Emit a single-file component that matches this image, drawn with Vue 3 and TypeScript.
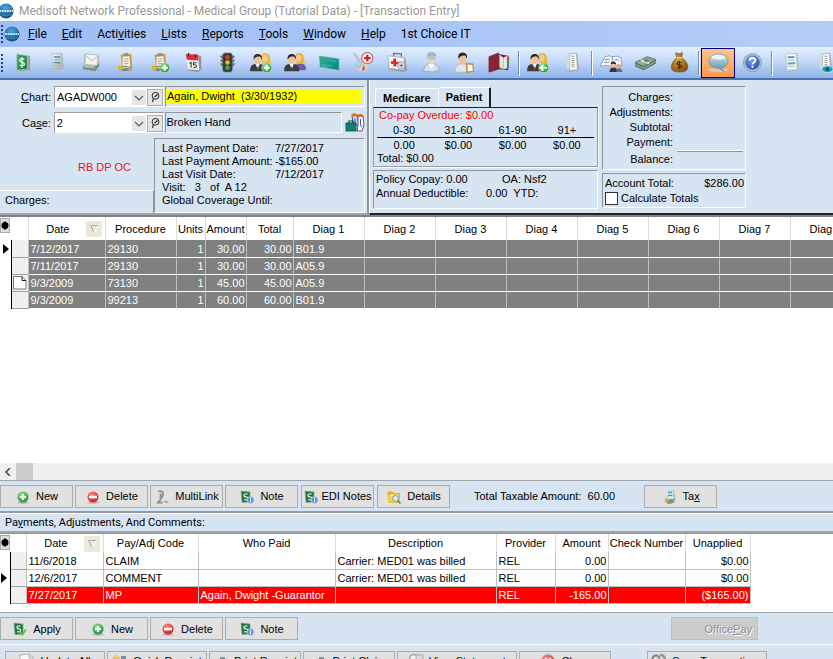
<script setup lang="ts">
import { ref } from 'vue'

interface Tool { icon: string; label: string; active?: boolean }
interface Charge { date: string; code: string; units: string; amount: string; total: string; diag: string; note?: boolean }
interface Payment { date: string; code: string; who: string; desc: string; provider: string; amount: string; check: string; unapplied: string; selected?: boolean }
interface Action { icon: string; label: string; size: string }

const menus: [string, string, string][] = [
  ['', 'F', 'ile'], ['', 'E', 'dit'], ['Acti', 'v', 'ities'], ['', 'L', 'ists'], ['', 'R', 'eports'],
  ['', 'T', 'ools'], ['', 'W', 'indow'], ['', 'H', 'elp'], ['1st Choice IT', '', ''],
]

const toolGroups: Tool[][] = [
  [
    { icon: 'ledger', label: 'Transactions' }, { icon: 'claim', label: 'Claims' }, { icon: 'statement', label: 'Statements' },
    { icon: 'clip', label: 'Collections' }, { icon: 'clip-add', label: 'Add collection' }, { icon: 'calendar', label: 'Appointments' },
    { icon: 'traffic', label: 'Eligibility' }, { icon: 'people-add', label: 'Quick patient' }, { icon: 'people', label: 'Patients' },
    { icon: 'card', label: 'Insurance' }, { icon: 'procedure', label: 'Procedures' }, { icon: 'kit', label: 'Diagnosis' },
    { icon: 'doctor', label: 'Providers' }, { icon: 'referral', label: 'Referring' }, { icon: 'book', label: 'Addresses' },
  ],
  [{ icon: 'people-back', label: 'Recall' }, { icon: 'doc', label: 'Reports' }],
  [{ icon: 'open-book', label: 'Patient ledger' }, { icon: 'cash', label: 'Deposits' }, { icon: 'bag', label: 'Payments' }],
  [{ icon: 'bubble', label: 'Messages', active: true }, { icon: 'help', label: 'Help' }],
  [{ icon: 'form', label: 'Forms' }, { icon: 'doc-view', label: 'View' }],
]

const info: [string, string][] = [
  ['Last Payment Date:', '7/27/2017'],
  ['Last Payment Amount:', '-$165.00'],
  ['Last Visit Date:', '7/12/2017'],
]

const aging: [string, string][] = [['0-30', '0.00'], ['31-60', '$0.00'], ['61-90', '$0.00'], ['91+', '$0.00']]

const charges: Charge[] = [
  { date: '7/12/2017', code: '29130', units: '1', amount: '30.00', total: '30.00', diag: 'B01.9' },
  { date: '7/11/2017', code: '29130', units: '1', amount: '30.00', total: '30.00', diag: 'A05.9' },
  { date: '9/3/2009', code: '73130', units: '1', amount: '45.00', total: '45.00', diag: 'A05.9', note: true },
  { date: '9/3/2009', code: '99213', units: '1', amount: '60.00', total: '60.00', diag: 'B01.9' },
]

const payments: Payment[] = [
  { date: '11/6/2018', code: 'CLAIM', who: '', desc: 'Carrier: MED01 was billed', provider: 'REL', amount: '0.00', check: '', unapplied: '$0.00' },
  { date: '12/6/2017', code: 'COMMENT', who: '', desc: 'Carrier: MED01 was billed', provider: 'REL', amount: '0.00', check: '', unapplied: '$0.00' },
  { date: '7/27/2017', code: 'MP', who: 'Again, Dwight -Guarantor', desc: '', provider: 'REL', amount: '-165.00', check: '', unapplied: '($165.00)', selected: true },
]

const chargeActions: Action[] = [
  { icon: 'plus', label: 'New', size: 'm' }, { icon: 'minus', label: 'Delete', size: 'm' }, { icon: 'link', label: 'MultiLink', size: 'm' },
  { icon: 'note', label: 'Note', size: 'm' }, { icon: 'note', label: 'EDI Notes', size: 'm tight' }, { icon: 'folder', label: 'Details', size: 'm' },
]
const paymentActions: Action[] = [
  { icon: 'apply', label: 'Apply', size: 'm' }, { icon: 'plus', label: 'New', size: 'm' },
  { icon: 'minus', label: 'Delete', size: 'm' }, { icon: 'note', label: 'Note', size: 'm' },
]
const footerActions: Action[] = [
  { icon: 'page', label: 'Update All', size: 'l' }, { icon: 'star', label: 'Quick Receipt', size: 'l' },
  { icon: 'printer', label: 'Print Receipt', size: 'n' }, { icon: 'printer', label: 'Print Claim', size: 'n' },
  { icon: 'view', label: 'View Statement', size: 'xl' }, { icon: 'close', label: 'Close', size: 'n' },
]

const chart = ref('AGADW000')
const caseNo = ref('2')
const tab = ref('Patient')
const calculate = ref(false)
</script>

<template>
  <svg class="sprite" aria-hidden="true">
    <defs>
      <linearGradient id="g-green" x1="0" y1="0" x2="1" y2="1"><stop offset="0" stop-color="#3fae6b" /><stop offset="1" stop-color="#0b7a3b" /></linearGradient>
      <linearGradient id="g-metal" x1="0" y1="0" x2="1" y2="1"><stop offset="0" stop-color="#fbfcfc" /><stop offset="1" stop-color="#a9aeae" /></linearGradient>
      <linearGradient id="g-teal" x1="0" y1="0" x2="1" y2="1"><stop offset="0" stop-color="#2fb9a0" /><stop offset="1" stop-color="#0c7d78" /></linearGradient>
      <radialGradient id="g-globe" cx=".45" cy=".3" r=".8"><stop offset="0" stop-color="#4ba6dc" /><stop offset="1" stop-color="#063f75" /></radialGradient>
      <radialGradient id="g-plus" cx=".4" cy=".3" r=".8"><stop offset="0" stop-color="#8be08a" /><stop offset="1" stop-color="#1a8a2a" /></radialGradient>
      <radialGradient id="g-red" cx=".4" cy=".3" r=".8"><stop offset="0" stop-color="#ff8a80" /><stop offset="1" stop-color="#c20f0f" /></radialGradient>
      <radialGradient id="g-blue" cx=".4" cy=".3" r=".8"><stop offset="0" stop-color="#7aa7f5" /><stop offset="1" stop-color="#1c47b5" /></radialGradient>
      <linearGradient id="g-bubble" x1="0" y1="0" x2="0" y2="1"><stop offset="0" stop-color="#dff0f4" /><stop offset=".5" stop-color="#8fbccb" /><stop offset="1" stop-color="#4f8da3" /></linearGradient>
      <radialGradient id="g-bag" cx=".4" cy=".4" r=".7"><stop offset="0" stop-color="#d9a53e" /><stop offset="1" stop-color="#7b4d0c" /></radialGradient>
    </defs>

    <symbol id="globe" viewBox="0 0 16 16">
      <circle cx="8" cy="8" r="7.600" fill="url(#g-globe)" />
      <path d="M1.500 5Q8 2.500 14.500 5M1.500 11.500Q8 14 14.500 11.500" stroke="#4b98cc" fill="none" stroke-width=".6" />
      <path d="M1 8h14" stroke="#c9e4f5" stroke-width="1.800" stroke-dasharray="2 .6" />
    </symbol>

    <symbol id="ledger" viewBox="0 0 24 24">
      <path d="M6 4l13 1v15L8 21z" fill="#9aa39c" />
      <path d="M5 3l11 2v14L5 20z" fill="url(#g-green)" stroke="#b9c8bd" stroke-width=".8" />
      <path d="M13 8.500Q8 7 8 9.800Q8 11.300 10.500 11.700Q13 12.200 13 14Q12.500 16.300 8 15M10.500 6.500v11" stroke="#fff" fill="none" stroke-width="1.300" />
    </symbol>
    <symbol id="claim" viewBox="0 0 24 24">
      <path d="M7 3l10-1 2 16-6 4-5-2z" fill="#b4bfc2" />
      <path d="M6 3h10l1 15H7z" fill="url(#g-metal)" stroke="#a5b0b3" stroke-width=".6" />
      <path d="M8 6l7 .5M8 12l7 .5" stroke="#4e9fae" stroke-width="1.800" />
      <path d="M8 9h7M8 15h7" stroke="#9daeb2" />
    </symbol>
    <symbol id="statement" viewBox="0 0 24 24">
      <path d="M5 3l15 2v10l-4 6-13-3z" fill="#b6bcbb" />
      <path d="M6 3l13 1-1 11-13-1z" fill="#f0f3f2" stroke="#a6adaa" stroke-width=".7" />
      <path d="M7 5l5 5 6-4" fill="none" stroke="#aeb5b3" />
      <path d="M3 15l13 1 4-3v3l-4 5-13-2z" fill="#7f8d85" />
      <path d="M4 16l11 1" stroke="#c7d5c8" stroke-width="1.300" />
    </symbol>
    <symbol id="clip" viewBox="0 0 24 24">
      <path d="M7 4l11-1 1 17-10 1z" fill="#d0953c" />
      <path d="M9 6l7-.5 1 12-8 1z" fill="#fbfaf4" />
      <path d="M10 2.500l5-.5v3l-5 .5z" fill="#8a8e8e" />
      <path d="M10 8.500l5-.5M10 11l5-.5M10 13.500l5-.5" stroke="#8f9696" />
      <path d="M5 17l7-2 7 2-6 4-7-1z" fill="#738b79" />
      <path d="M8 18l5-1 4 1" stroke="#d5e2d3" fill="none" />
      <circle cx="6.500" cy="17.500" r="2.600" fill="#e5b51f" />
    </symbol>
    <symbol id="badge-plus" viewBox="0 0 24 24">
      <circle cx="17.500" cy="17.500" r="5.200" fill="url(#g-plus)" stroke="#d5efd2" stroke-width=".6" />
      <path d="M17.500 14.300v6.400M14.300 17.500h6.400" stroke="#fff" stroke-width="2" />
    </symbol>
    <symbol id="clip-add" viewBox="0 0 24 24"><use href="#clip" /><use href="#badge-plus" /></symbol>
    <symbol id="calendar" viewBox="0 0 24 24">
      <path d="M5 4l15 1v14l-3 3-11-2z" fill="#8f908f" />
      <path d="M4 4l13 1 1 15-12-1z" fill="#eceeee" />
      <path d="M4 3l13 1v6L5 9z" fill="#d5323a" />
      <path d="M7 2v4M14 3v4" stroke="#7b2427" stroke-width="1.500" />
      <path d="M8 13l1.500-1v5.500M15 12.300h-3v2q3-.3 3 1.500t-3 1.500" stroke="#333" fill="none" stroke-width="1.100" />
    </symbol>
    <symbol id="traffic" viewBox="0 0 24 24">
      <path d="M4 5h16l-3 4h3l-3 4h3l-3 4H7l-3-4h3L4 9h3z" fill="#606866" />
      <rect x="7" y="2" width="10" height="20" rx="2.500" fill="#343938" stroke="#7a8481" stroke-width=".7" />
      <circle cx="12" cy="6.500" r="2.400" fill="#e2372c" /><circle cx="12" cy="12" r="2.400" fill="#e9b72c" /><circle cx="12" cy="17.500" r="2.400" fill="#36b04c" />
    </symbol>
    <symbol id="pair" viewBox="0 0 24 24">
      <path d="M12 6q0-4 4-4t4.500 4q.5 5 1.500 6-3 2-7 1.500-3-1-3-7.500z" fill="#e8b92b" />
      <ellipse cx="15.500" cy="7.500" rx="2.800" ry="3.500" fill="#f4c9a0" />
      <path d="M0 21q0-7 5-7.500l3 1.500 3-1.500q5 1 5 7.500z" fill="#3b3d42" />
      <path d="M6 13.500l2 6 2-6z" fill="#fff" /><path d="M8 15l-.8 4 .8 1.500.8-1.500z" fill="#a62a2a" />
      <ellipse cx="8" cy="8.800" rx="3.700" ry="4.900" fill="#f2c296" />
      <path d="M3.800 9q-1-5.500 4-6 5.300 0 4.700 6-1-3-3-3.500-4 0-5.700 3.500z" fill="#2c2522" />
    </symbol>
    <symbol id="people" viewBox="0 0 24 24">
      <path d="M11 20q0-7 5.500-7.500 6 .5 6.500 5.500l-1 2z" fill="#7a58a0" /><use href="#pair" />
    </symbol>
    <symbol id="people-add" viewBox="0 0 24 24"><use href="#pair" /><use href="#badge-plus" /></symbol>
    <symbol id="people-back" viewBox="0 0 24 24">
      <use href="#pair" /><circle cx="17.500" cy="17.500" r="5.200" fill="url(#g-plus)" stroke="#d5efd2" stroke-width=".6" />
      <path d="M21 17.500h-6.500M17 14.500l-3 3 3 3" stroke="#fff" fill="none" stroke-width="1.700" />
    </symbol>
    <symbol id="card" viewBox="0 0 24 24">
      <path d="M1 5l21 3v12L2 17z" fill="url(#g-teal)" stroke="#8fd5c8" stroke-width=".5" />
      <path d="M3.500 8.500l2 .3" stroke="#e6523f" stroke-width="2" />
      <path d="M4 14l11 1.700M11 10l8 1M4 16l6 1" stroke="#5cc4b2" stroke-width=".7" />
    </symbol>
    <symbol id="procedure" viewBox="0 0 24 24">
      <path d="M2 2l10 15M3 14l8 4" stroke="#b9bfc2" stroke-width="2.400" />
      <path d="M9 17l5-6 3 4-3 6H7z" fill="#d9d4cf" /><path d="M12 14l2 5-4 2z" fill="#e0603a" />
      <circle cx="16" cy="7.500" r="5.800" fill="#fff" stroke="#d0606a" stroke-width="1.300" />
      <path d="M16 4v7M12.500 7.500h7" stroke="#d51f26" stroke-width="2.400" />
    </symbol>
    <symbol id="kit" viewBox="0 0 24 24">
      <path d="M8 5V2.500l8 .5v3" fill="none" stroke="#6e777c" stroke-width="1.500" />
      <path d="M2 5l18 2 2 13-4 2-16-3z" fill="#8e979a" /><path d="M2 5l17 2v13L3 18z" fill="#f2f4f4" stroke="#a5adaf" stroke-width=".7" />
      <path d="M9 8l.3 8M5 12l9 .5" stroke="#d6252b" stroke-width="2.800" />
      <circle cx="16" cy="15" r="4" fill="#d5e3e8" stroke="#87979d" opacity=".85" /><path d="M16 13v4M14 15h4" stroke="#c3444a" />
    </symbol>
    <symbol id="doctor" viewBox="0 0 24 24">
      <path d="M4 21q0-7 6-8h4q6 2 6 7l-6 2z" fill="#d5e4ec" stroke="#8298a5" stroke-width=".7" />
      <path d="M9 13l3 6 3-6z" fill="#fff" /><ellipse cx="12" cy="8" rx="4.200" ry="5.500" fill="#e9b98f" />
      <path d="M7 6q0-5 5-5t5 5q-4-1.500-10 0z" fill="#8fbcd6" /><path d="M8 9.500q4-1 8 0-.8 4.500-4 4.500t-4-4.500z" fill="#c9deea" />
    </symbol>
    <symbol id="referral" viewBox="0 0 24 24">
      <path d="M1 22q0-7 6-8.500h5q5 2 5 8.500z" fill="#e1e8ea" stroke="#a9b6ba" stroke-width=".6" />
      <ellipse cx="9" cy="8" rx="3.900" ry="5.200" fill="#f0c094" />
      <path d="M4.500 8q-1-6 4.500-6.500 5.500.5 4.500 6.500-1-3-3-3.500-4 .5-6 3.500z" fill="#3a2117" />
      <path d="M12 12l8 1 1 9-8 1z" fill="#c98f43" /><path d="M14 14l5 .5.5 6-5 .5z" fill="#fff" />
    </symbol>
    <symbol id="book" viewBox="0 0 24 24">
      <path d="M1 6l10-4v17l-10 3z" fill="#8b2433" stroke="#5c1622" stroke-width=".6" />
      <path d="M11 19V3l10 2v15l-8-1z" fill="#6e2430" /><path d="M12 17V4l4 3v12zM16 7l4-2v13l-4 1z" fill="#e8e7e2" stroke="#b0afab" stroke-width=".5" />
      <path d="M21 6v4" stroke="#d33b3b" stroke-width="2" /><path d="M21 10v4" stroke="#3f9a4f" stroke-width="2" /><path d="M21 14v4" stroke="#3e78c9" stroke-width="2" />
    </symbol>
    <symbol id="doc" viewBox="0 0 24 24">
      <path d="M6 3l11-1 2 18-9 2-4-2z" fill="#a8adaf" /><path d="M5 3h4v17l-3-1z" fill="#d8dbdb" /><path d="M9 3l7-.5 1 17-8 .5z" fill="#f6f7f7" stroke="#a9aeb0" stroke-width=".6" />
      <path d="M12.500 5v13" stroke="#8f9699" stroke-width="3" stroke-dasharray="1 1.200" />
    </symbol>
    <symbol id="doc-view" viewBox="0 0 24 24"><use href="#doc" /><ellipse cx="14" cy="19" rx="6" ry="3.500" fill="#19a5bd" stroke="#b9ecf2" /><circle cx="14" cy="19" r="2" fill="#075a72" /></symbol>
    <symbol id="open-book" viewBox="0 0 24 24">
      <path d="M0 16L5 6q5-2 8 0 4-2 9 1l1 9q-6-2-10 0-6-2-13 0z" fill="#f4f6f6" stroke="#8fa0ab" />
      <path d="M13 6l-1 10M5 9l5-.5M4 12l6-.5M15 9l5 .5" stroke="#7792ab" />
      <path d="M10 22q0-5 4-5t4 5z" fill="#34373c" /><circle cx="14" cy="14.500" r="2.700" fill="#efbf93" /><path d="M11.300 14q0-3 2.700-3t2.700 3q-3-1.500-5.400 0z" fill="#4a2a1e" />
      <path d="M17 22q0-4 3-4t3.500 4z" fill="#7b5c9c" /><circle cx="19.500" cy="15.500" r="2.300" fill="#e9a860" />
    </symbol>
    <symbol id="cash" viewBox="0 0 24 24">
      <path d="M1 12l13-6 9 3v4L10 20l-9-4z" fill="#54715f" /><path d="M1 12l13-6 9 3-13 7z" fill="#92ad96" stroke="#5f7b68" />
      <path d="M1 14l9 4 13-7" stroke="#a9bfab" fill="none" /><path d="M7 9.500l9 3.500" stroke="#dde4d3" stroke-width="2" /><ellipse cx="13" cy="10" rx="2.500" ry="1.400" fill="#5f806a" />
    </symbol>
    <symbol id="bag" viewBox="0 0 24 24">
      <path d="M8 2q4 2 7-.5L14.500 7q7 5 6 11-1 4-8.500 4T3.500 18Q3 12 9 7z" fill="url(#g-bag)" stroke="#6f450d" stroke-width=".6" />
      <path d="M8.500 7h6.500" stroke="#efd081" stroke-width="1.500" /><path d="M14 12q-4.500-1.500-4.500.8t2.500 1.700q2.500.5 2 2.200-1 1.500-4.500.5M12 10.500v8.500" stroke="#3b2403" fill="none" stroke-width="1.200" />
    </symbol>
    <symbol id="bubble" viewBox="0 0 24 24">
      <path d="M5 18q-3 0-4 2 5 2 11 2t10-2q-1-2-4-2z" fill="#d8cfcc" opacity=".8" />
      <path d="M12 3q10 .5 10 7.500-.5 6-7 7l3 4-6-3.500Q2 18 2 10.500 2.500 3.500 12 3z" fill="url(#g-bubble)" stroke="#5791a5" stroke-width=".7" />
      <ellipse cx="11.500" cy="6.500" rx="7" ry="2.500" fill="#f4fbfd" opacity=".75" />
    </symbol>
    <symbol id="help" viewBox="0 0 24 24">
      <circle cx="12" cy="12" r="9.500" fill="#b9bfcc" stroke="#7d8698" stroke-width=".6" /><circle cx="12" cy="12" r="7.500" fill="url(#g-blue)" />
      <path d="M9 9.800Q9.200 7.300 12 7.300t3 2.400q0 1.500-1.600 2.300Q12 12.700 12 14.200M12 15.500v2" stroke="#fff" fill="none" stroke-width="1.900" />
    </symbol>
    <symbol id="form" viewBox="0 0 24 24">
      <path d="M7 3l11-1 2 17-8 3-5-2z" fill="#b8c0c3" /><path d="M6 3l11-.5 1 17-11 .5z" fill="#f4f7f8" stroke="#a4b0b5" stroke-width=".6" />
      <path d="M8 6.500l7-.3M8 13l8-.3" stroke="#55a6c2" stroke-width="2" /><path d="M8 9.500h7M8 16h8" stroke="#a8b7bd" />
    </symbol>

    <symbol id="plus" viewBox="0 0 16 16">
      <ellipse cx="8" cy="13.500" rx="6" ry="1.500" fill="#bdbdbd" /><circle cx="8" cy="8" r="5.500" fill="url(#g-plus)" /><path d="M8 5v6M5 8h6" stroke="#fff" stroke-width="2.200" />
    </symbol>
    <symbol id="minus" viewBox="0 0 16 16">
      <ellipse cx="8" cy="13.500" rx="6" ry="1.500" fill="#bdbdbd" /><circle cx="8" cy="8" r="5.500" fill="url(#g-red)" /><path d="M4 8h8" stroke="#fff" stroke-width="2.600" />
    </symbol>
    <symbol id="link" viewBox="0 0 16 16">
      <path d="M4 2.500q5-1.500 5 2.500 0 3-3 6l-2 2.500h4.500M6 4.500q1.500 2 0 4.500" fill="none" stroke="#8d9191" stroke-width="1.800" /><path d="M10 13q2-1 4 .5" fill="none" stroke="#a5a9a9" stroke-width="1.800" />
    </symbol>
    <symbol id="note" viewBox="0 0 16 16">
      <path d="M2 2l9 1v10l-8 .5z" fill="#23733f" stroke="#7aa68a" stroke-width=".7" /><path d="M8.500 5.200Q5 4.500 5 6.200t2 1.700 1.700 1.800-3.500 1" fill="none" stroke="#e3f3e7" stroke-width="1.200" />
      <circle cx="11.500" cy="11" r="3.500" fill="#5d93dc" stroke="#cfe0f5" stroke-width=".6" /><path d="M11.500 8.700v1M11.500 10.300v3" stroke="#fff" stroke-width="1.200" />
    </symbol>
    <symbol id="apply" viewBox="0 0 16 16">
      <path d="M2 2l9 1v10l-8 .5z" fill="#23733f" stroke="#7aa68a" stroke-width=".7" /><path d="M8.500 5.200Q5 4.500 5 6.200t2 1.700 1.700 1.800-3.500 1" fill="none" stroke="#e3f3e7" stroke-width="1.200" />
      <path d="M8 11l2.500 2.500 3.500-5" fill="none" stroke="#5fc244" stroke-width="1.800" />
    </symbol>
    <symbol id="folder" viewBox="0 0 16 16">
      <path d="M1.500 2.500h5l1.500 1.500h6v10H2.500z" fill="#e7af27" /><path d="M3.500 5.500h9V12h-8z" fill="#fff3bf" /><path d="M2 7.500l11-1 .5 7H2.500z" fill="#f7cf4d" />
      <circle cx="9.500" cy="9.500" r="3" fill="#d8e9f5" stroke="#7d95a5" /><path d="M11.500 11.500l3 3" stroke="#6b7f90" stroke-width="1.700" />
    </symbol>
    <symbol id="tax" viewBox="0 0 16 16">
      <path d="M5 1.500l7-.5 1.500 10-4 4-5-1z" fill="#9eacaf" /><path d="M4.500 1.500l6.500-.5 1 9-6.500.5z" fill="#dbe6e9" /><path d="M6 3.500l4-.3M6 6.500l4.500-.3" stroke="#51a0b0" stroke-width="1.400" />
      <path d="M3.500 11l8-1 1 3.500-7 1.500z" fill="#7c9483" /><circle cx="4.500" cy="11.500" r="2" fill="#e2b224" />
    </symbol>
    <symbol id="page" viewBox="0 0 16 16"><path d="M1 2l9-1 4 3v11H1z" fill="#f8f8f8" stroke="#b2b2b2" /><path d="M10 1v4h4" fill="#ddd" stroke="#b2b2b2" /></symbol>
    <symbol id="star" viewBox="0 0 16 16"><path d="M4 1l1.500 3 3.500.3-2.500 2.500.7 3.500L4 8.500 1 10l.5-3.500L0 4.300 2.500 4z" fill="#f2c552" /><path d="M9 3h5v11H9z" fill="#858c8f" /></symbol>
    <symbol id="printer" viewBox="0 0 16 16"><path d="M7 4h5v4H7z" fill="#8a9092" /><path d="M2 8h13v6H2z" fill="#a9afb1" /></symbol>
    <symbol id="view" viewBox="0 0 16 16"><circle cx="6" cy="6" r="4.500" fill="#eef2f3" stroke="#9aa0a2" stroke-width="1.500" /><path d="M8 2h7v12H8z" fill="#d7dbdc" stroke="#a7adaf" /></symbol>
    <symbol id="close" viewBox="0 0 16 16"><circle cx="8" cy="8" r="6.500" fill="url(#g-red)" stroke="#b5b5b5" /><path d="M5 5l6 6M11 5l-6 6" stroke="#fff" stroke-width="1.800" /></symbol>
    <symbol id="gear" viewBox="0 0 16 16"><circle cx="5" cy="6" r="3.500" fill="none" stroke="#7e8486" stroke-width="2" /><path d="M9 2q5 0 5 6" fill="none" stroke="#8f9597" stroke-width="2.500" /></symbol>
    <symbol id="lookup" viewBox="0 0 12 12"><circle cx="6.500" cy="4.800" r="3.400" fill="none" stroke="#222" /><path d="M4.500 7.300L3.500 11M5.500 6l3-2.500" stroke="#222" fill="none" stroke-width="1.100" /></symbol>
    <symbol id="chevron" viewBox="0 0 10 10"><path d="M1 3l4 4 4-4" fill="none" stroke="#555" stroke-width="1.100" /></symbol>
    <symbol id="sort" viewBox="0 0 16 16"><path d="M12 4.500H4.500L8 11.500" fill="none" stroke="#aca899" /><path d="M8.500 11.500l3.500-7" stroke="#fff" /></symbol>
    <symbol id="marker" viewBox="0 0 10 15"><rect x=".5" y=".5" width="9" height="14" fill="#ddd" stroke="#aaa" /><path d="M5 3v9M2.500 5l5 5M7.500 5l-5 5" stroke="#000" /><circle cx="5" cy="7.500" r="3.500" /></symbol>
    <symbol id="case" viewBox="0 0 20 20">
      <rect width="20" height="20" fill="#e4e4e4" /><path d="M7 2h5l1 3 1 7H8z" fill="#c8cbe8" stroke="#2b2b80" stroke-width=".7" /><path d="M13 3h5l1 9-2 6h-5l1-6z" fill="#fff" stroke="#2b2b80" stroke-width=".8" />
      <path d="M7 3q2-3 5 0M13 3.500q2-3 5 0" stroke="#d5761c" stroke-width="2.500" fill="none" /><path d="M15.500 6v5l1 3M10 6v5" stroke="#4343b4" fill="none" />
      <rect x="1" y="10" width="10" height="8" fill="#0f8079" stroke="#054b47" stroke-width=".8" /><path d="M4 10V8h4v2" fill="none" stroke="#054b47" stroke-width="1.200" />
    </symbol>
  </svg>

  <main class="window">
    <header class="titlebar"><svg class="logo"><use href="#globe" /></svg><h1>Medisoft Network Professional - Medical Group (Tutorial Data) - [Transaction Entry]</h1></header>

    <nav class="menubar">
      <span class="grip"></span><svg class="logo"><use href="#globe" /></svg>
      <a v-for="m in menus" :key="m.join('')" href="#">{{ m[0] }}<u>{{ m[1] }}</u>{{ m[2] }}</a>
    </nav>

    <div class="toolbar" role="toolbar">
      <span class="grip"></span>
      <div v-for="(g, i) in toolGroups" :key="i" class="group">
        <button v-for="t in g" :key="t.icon" type="button" :class="{ active: t.active }" :aria-label="t.label"><svg><use :href="'#' + t.icon" /></svg></button>
      </div>
    </div>

    <section class="summary">
      <div class="case-panel">
        <div class="field-row">
          <label for="chart"><u>C</u>hart:</label>
          <div class="combo">
            <div class="picker"><select id="chart" v-model="chart"><option>AGADW000</option></select><svg><use href="#chevron" /></svg></div>
            <button type="button" aria-label="Find chart"><svg><use href="#lookup" /></svg></button>
          </div>
          <div class="readout wide"><mark>Again, Dwight&nbsp; (3/30/1932)</mark></div>
        </div>
        <div class="field-row">
          <label for="case">Ca<u>s</u>e:</label>
          <div class="combo">
            <div class="picker"><select id="case" v-model="caseNo"><option>2</option></select><svg><use href="#chevron" /></svg></div>
            <button type="button" aria-label="Find case"><svg><use href="#lookup" /></svg></button>
          </div>
          <div class="readout"><span>Broken Hand</span></div>
          <button type="button" class="case-button" aria-label="Open case"><svg><use href="#case" /></svg></button>
        </div>
        <div class="case-bottom">
          <div class="flags"><p class="codes">RB DP OC</p><p class="charges-label">Charges:</p></div>
          <div class="info">
            <dl><template v-for="r in info" :key="r[0]"><dt>{{ r[0] }}</dt><dd>{{ r[1] }}</dd></template></dl>
            <p>Visit:&nbsp;&nbsp; 3&nbsp;&nbsp; of&nbsp; A 12</p>
            <p>Global Coverage Until:</p>
          </div>
        </div>
      </div>

      <div class="billing">
        <div class="coverage">
          <div class="tabs" role="tablist">
            <button v-for="t in ['Medicare', 'Patient']" :key="t" type="button" role="tab" :aria-selected="tab === t" :class="{ on: tab === t }" @click="tab = t">{{ t }}</button>
          </div>
          <div class="aging">
            <p class="overdue">Co-pay Overdue: $0.00</p>
            <table>
              <thead><tr><th v-for="a in aging" :key="a[0]">{{ a[0] }}</th></tr></thead>
              <tbody><tr><td v-for="a in aging" :key="a[0]">{{ a[1] }}</td></tr></tbody>
            </table>
            <p class="aging-total">Total: $0.00</p>
          </div>
          <div class="policy">
            <p><span>Policy Copay: 0.00</span><span>OA: Nsf2</span></p>
            <p><span>Annual Deductible:</span><span>0.00&nbsp; YTD:</span></p>
          </div>
        </div>
        <div class="totals">
          <div class="totals-box"><p>Charges:</p><p>Adjustments:</p><p>Subtotal:</p><p>Payment:</p><hr><p class="balance">Balance:</p></div>
          <div class="account">
            <p><span>Account Total:</span><span>$286.00</span></p>
            <label><input v-model="calculate" type="checkbox">Calculate Totals</label>
          </div>
        </div>
      </div>
    </section>

    <section class="grid-area charges-area">
      <table class="grid charges">
        <colgroup><col class="w11"><col class="w17"><col class="w77"><col class="w71"><col class="w29"><col class="w41"><col class="w47"><col v-for="n in 8" :key="n" class="w71"></colgroup>
        <thead>
          <tr>
            <th class="dot"><svg><use href="#marker" /></svg></th><th></th>
            <th><span class="sorted">Date<svg><use href="#sort" /></svg></span></th>
            <th>Procedure</th><th>Units</th><th>Amount</th><th>Total</th><th v-for="n in 8" :key="n">Diag {{ n }}</th>
          </tr>
        </thead>
        <tbody>
          <tr v-for="(c, i) in charges" :key="i">
            <td class="gutter"><i v-if="i === 0"></i></td>
            <td class="head"><svg v-if="c.note" viewBox="0 0 14 14"><path d="M.5.500h8.500l4 4v8.500H.5z" fill="#fff" stroke="#777" /><path d="M9 .5v4h4" fill="none" stroke="#222" /></svg></td>
            <td>{{ c.date }}</td><td>{{ c.code }}</td><td class="num">{{ c.units }}</td><td class="num">{{ c.amount }}</td><td class="num">{{ c.total }}</td><td>{{ c.diag }}</td><td v-for="n in 7" :key="n"></td>
          </tr>
        </tbody>
      </table>
    </section>
    <div class="scrollbar"><button type="button" aria-label="Scroll left"><svg viewBox="0 0 8 8"><path d="M6 0L2 4l4 4" fill="none" stroke="#444" stroke-width="1.600" /></svg></button><span></span></div>

    <div class="actions">
      <button v-for="a in chargeActions" :key="a.label" type="button" class="btn" :class="a.size"><svg><use :href="'#' + a.icon" /></svg>{{ a.label }}</button>
      <p>Total Taxable Amount:&nbsp; 60.00</p>
      <button type="button" class="btn m"><svg><use href="#tax" /></svg><span>Ta<u>x</u></span></button>
    </div>
    <h2>Pa<u>y</u>ments, Adjustments, And Comments:</h2>

    <section class="grid-area payments-area">
      <table class="grid payments">
        <colgroup><col class="w10"><col class="w16"><col class="w77"><col class="w95"><col class="w137"><col class="w161"><col class="w59"><col class="w53"><col class="w77"><col class="w65"></colgroup>
        <thead>
          <tr>
            <th class="dot"><svg><use href="#marker" /></svg></th><th></th><th><span class="sorted">Date<svg><use href="#sort" /></svg></span></th>
            <th>Pay/Adj Code</th><th>Who Paid</th><th>Description</th><th>Provider</th><th>Amount</th><th>Check Number</th><th>Unapplied</th>
          </tr>
        </thead>
        <tbody>
          <tr v-for="(p, i) in payments" :key="i" :class="{ selected: p.selected }">
            <td class="gutter"><i v-if="i === 1"></i></td><td class="head"></td>
            <td>{{ p.date }}</td><td>{{ p.code }}</td><td>{{ p.who }}</td><td>{{ p.desc }}</td><td>{{ p.provider }}</td><td class="num">{{ p.amount }}</td><td>{{ p.check }}</td><td class="num">{{ p.unapplied }}</td>
          </tr>
        </tbody>
      </table>
    </section>

    <div class="actions lower">
      <button v-for="a in paymentActions" :key="a.label" type="button" class="btn" :class="a.size"><svg><use :href="'#' + a.icon" /></svg>{{ a.label }}</button>
      <button type="button" class="btn office" disabled><span>Office<u>P</u>ay</span></button>
    </div>
    <footer class="actions foot">
      <button v-for="a in footerActions" :key="a.label" type="button" class="btn" :class="a.size"><svg><use :href="'#' + a.icon" /></svg>{{ a.label }}</button>
      <button type="button" class="btn xl save"><svg><use href="#gear" /></svg>Save Transactions</button>
    </footer>
  </main>
</template>

<style>
html, body { overflow: hidden; background: #d7e4f2; }
body { margin: 0; }
</style>

<style scoped>
* { box-sizing: border-box; }
p, h1, h2, dl, dd { margin: 0; font-weight: normal; }
button, select, input { font: inherit; color: inherit; margin: 0; padding: 0; border-radius: 0; }
svg { display: block; flex: none; }
table { border-collapse: collapse; }
.sprite { position: absolute; width: 0; height: 0; }
.window { font: 11px/13px "Liberation Sans", Arial, sans-serif; color: #000; background: #d7e4f2; overflow: hidden; }

.logo { width: 16px; height: 16px; }
.titlebar { display: flex; align-items: center; gap: 5px; height: 21px; background: #fff; color: #999; overflow: hidden; }
.titlebar h1 { font: 12px/20px Roboto, "Open Sans", sans-serif; white-space: nowrap; }
.titlebar .logo { margin-left: -2px; }
.menubar { display: flex; align-items: center; height: 26px; font: 12px/24px Roboto, "Open Sans", sans-serif; background: linear-gradient(90deg, #9ebef5, #b4cdf7); }
.menubar .logo { margin-right: 8px; }
.menubar a { color: #000; text-decoration: none; margin-right: 15px; white-space: nowrap; }
.grip { width: 2px; height: 18px; margin: 0 1px; flex: none; background: repeating-linear-gradient(#27418a 0 2px, transparent 2px 4px); }
.toolbar { display: flex; align-items: center; height: 33px; padding-right: 2px; border-bottom: 2px solid #4a72b0; background: linear-gradient(#e3efff, #c4dafa 45%, #8fb2e8); }
.toolbar .grip { margin: 0 3px 0 1px; }
.group { display: flex; flex: none; }
.group + .group::before { content: ""; width: 1px; height: 24px; margin: 3px 2px; background: #6a8ccb; box-shadow: 1px 1px #fff; }
.group button { width: 34px; height: 30px; border: 1px solid transparent; background: none; display: grid; place-items: center; }
.group button.active { border-color: #000080; background: linear-gradient(#ffc48a, #ff9550); }
.group svg { width: 23px; height: 23px; }

.summary { display: flex; height: 137px; border-bottom: 2px solid #808285; }
.case-panel { width: 369px; flex: none; display: flex; flex-direction: column; padding: 6px 2px 0 0; border-right: 2px solid #8f9499; border-bottom: 2px solid #a0a4a8; }
.field-row { display: flex; align-items: center; height: 21px; margin-bottom: 5px; }
.field-row > label { width: 51px; text-align: right; margin-right: 3px; padding-top: 2px; }
.combo { display: flex; align-items: center; width: 110px; height: 21px; background: #fff; border-top: 1px solid #a0a0a0; border-left: 1px solid #a0a0a0; }
.picker { position: relative; width: 91px; }
.picker select { appearance: none; width: 100%; height: 19px; border: 0; padding-left: 2px; background: linear-gradient(#e6e6e6, #e6e6e6) right / 14px 15px no-repeat #fff; outline: 0; }
.picker svg { position: absolute; right: 2px; top: 5px; width: 10px; height: 10px; pointer-events: none; }
.combo button { width: 16px; height: 17px; margin-left: 1px; border: 1px solid #adadad; background: #e5e5e5; display: grid; place-items: center; }
.combo button svg { width: 12px; height: 12px; }
.readout { width: 178px; height: 21px; margin-left: 1px; border: 1px solid; border-color: #8f9499 #fff #fff #8f9499; padding: 2px 0; }
.readout.wide { width: 200px; padding-right: 2px; }
.readout mark, .readout span { display: block; line-height: 15px; padding-left: 1px; color: #000; }
.readout mark { background: #ff0; line-height: 14px; }
.case-button { width: 20px; height: 20px; border: 0; margin-left: 3px; }
.case-button svg { width: 20px; height: 20px; }
.case-bottom { flex: 1; display: flex; }
.flags { width: 154px; display: flex; flex-direction: column; }
.codes { flex: 1; padding: 23px 0 0 78px; font-size: 11px; color: #e8141c; }
.charges-label { height: 23px; padding: 3px 5px; border-top: 1px solid #fff; border-right: 1px solid #8f9499; }
.info { flex: 1; padding: 3px 7px; border: 1px solid; border-color: #8f9499 #fff #fff #8f9499; white-space: nowrap; }
.info dl { display: grid; grid-template-columns: 113px 1fr; }

.billing { flex: 1; display: flex; align-items: flex-start; gap: 4px; padding: 6px 4px 0 3px; border-left: 1px solid #fff; border-bottom: 2px solid #222; }
.coverage { width: 225px; }
.tabs { display: flex; align-items: flex-end; height: 21px; padding-left: 2px; }
.tabs button { height: 19px; padding: 0 7px; font-weight: bold; background: none; border: solid #fff; border-width: 1px 0 0 1px; border-top-left-radius: 3px; }
.tabs button.on { height: 20px; padding: 0 7px 1px; border-right: 2px solid #222; border-top-right-radius: 2px; }
.aging { height: 60px; padding: 1px 3px 0; border: 1px solid #9a9ea3; border-top: 1px solid #222; box-shadow: 1px 1px #fff; }
.overdue { padding-left: 2px; color: #f00; }
.aging table { width: 100%; margin-top: 1px; table-layout: fixed; }
.aging th, .aging td { padding: 0; font-weight: normal; text-align: center; line-height: 14px; }
.aging th { border-bottom: 1px solid #000; }
.policy { height: 39px; margin-top: 3px; padding: 1px 2px; border: 1px solid; border-color: #8f9499 #fff #fff #8f9499; }
.policy p { display: grid; grid-template-columns: 126px 1fr; line-height: 14px; }
.policy p + p { grid-template-columns: 110px 1fr; }
.totals { width: 144px; }
.totals-box { height: 84px; padding: 3px 2px; border: 1px solid; border-color: #8f9499 #fff #fff #8f9499; }
.totals-box p { width: 68px; line-height: 15px; text-align: right; }
.totals-box hr { width: 66px; height: 2px; margin: 0 0 0 auto; border: 0; border-top: 1px solid #fff; border-bottom: 1px solid #8f9499; }
.account { height: 35px; margin-top: 3px; padding: 3px 1px 0 2px; border: 1px solid; border-color: #8f9499 #fff #fff #8f9499; }
.account p { display: flex; justify-content: space-between; }
.account label { display: flex; align-items: center; gap: 3px; margin-top: 2px; }
.account input { appearance: none; width: 13px; height: 13px; border: 1px solid #333; background: #fff; }

.grid-area { background: #fff; overflow: hidden; }
.charges-area { height: 246px; }
.payments-area { height: 79px; border-top: 1px solid #8f9499; }
.grid { table-layout: fixed; width: 0; }
.w10 { width: 10px; } .w11 { width: 11px; } .w16 { width: 16px; } .w17 { width: 17px; } .w29 { width: 29px; }
.w41 { width: 41px; } .w47 { width: 47px; } .w53 { width: 53px; } .w59 { width: 59px; } .w65 { width: 65px; }
.w71 { width: 71px; } .w77 { width: 77px; } .w95 { width: 95px; } .w137 { width: 137px; } .w161 { width: 161px; }
.grid th { height: 23px; padding: 1px 0 0; font-weight: normal; white-space: nowrap; border-right: 1px solid #dcdcdc; }
.payments th { height: 18px; }
.grid td { height: 17px; padding: 1px 2px 0; line-height: 14px; white-space: nowrap; border-right: 1px solid #c0c0c0; border-bottom: 1px solid #c0c0c0; }
.charges td { background: #808080; color: #fff; border-bottom-color: #fff; }
.grid td.num { text-align: right; padding-right: 1px; }
.grid td.gutter { background: #fff; padding: 0 0 0 3px; border-bottom: 0; border-right: 1px solid #000; }
.gutter i { display: block; width: 0; height: 0; border: 5px solid transparent; border-left: 6px solid #000; border-right: 0; }
.payments td.gutter { padding-left: 1px; }
.grid td.head { background: #f0f0f0; padding: 0 0 0 1px; border-bottom-color: #a0a0a0; }
.head svg { width: 14px; height: 14px; }
.dot svg { width: 10px; height: 15px; }
.grid th.dot { border-right: 0; vertical-align: top; }
.sorted { display: flex; align-items: center; justify-content: flex-end; gap: 16px; padding-right: 3px; }
.sorted svg { width: 16px; height: 16px; background: #ece9d8; }
.payments .selected td:not(.gutter):not(.head) { background: #f00; color: #fff; }

.scrollbar { display: flex; height: 17px; background: #f0f0f0; }
.scrollbar button { width: 16px; border: 0; background: none; display: grid; place-items: center; }
.scrollbar svg { width: 8px; height: 8px; }
.scrollbar span { width: 17px; background: #cdcdcd; }

.actions { display: flex; align-items: center; gap: 2px; height: 33px; border-top: 1px solid #a0a4a8; border-bottom: 2px solid #9a9a9a; white-space: nowrap; }
.actions p { margin: 0 27px 0 22px; }
.btn { display: flex; align-items: center; justify-content: center; gap: 5px; height: 23px; padding-top: 1px; flex: none; border: 1px solid #adadad; background: #e1e1e1; line-height: 13px; }
.btn svg { width: 16px; height: 16px; }
.btn.m { width: 73px; }
.btn.tight { gap: 2px; margin: 0 1px; }
.btn.n { width: 92px; } .btn.l { width: 100px; } .btn.xl { width: 120px; }
h2 { height: 20px; padding: 2px 5px; font: 11px/13px Roboto, "Noto Sans", sans-serif; border-top: 1px solid #fff; border-bottom: 2px solid #a0a4a8; }
.actions.lower { border-bottom: 1px solid #fff; }
.office { width: 87px; margin-left: 371px; justify-content: flex-end; padding-right: 5px; background: #ccc; border-color: #bfbfbf; color: #8c8c8c; text-shadow: 1px 1px #fff; }
.foot { padding: 5px 5px 0; border-top: 1px solid #d7e4f2; border-bottom: 0; align-items: flex-start; }
.foot .btn { height: 22px; padding: 0 0 2px; }
.save { margin-left: 34px; }
</style>
